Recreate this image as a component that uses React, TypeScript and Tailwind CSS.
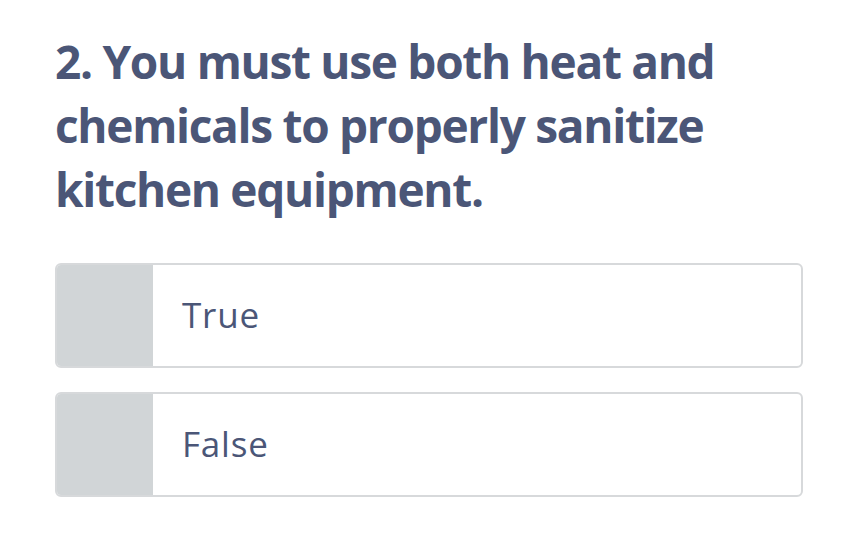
import React from 'react';

const options = ['True', 'False'];

const App: React.FC = () => {
  return (
    <div
      className="min-h-screen bg-white text-[#4b5677]"
      style={{ fontFamily: '"Open Sans", "Liberation Sans", sans-serif' }}
    >
      <div className="w-[748px] ml-[55px] pt-[29px]">
        <h2 className="text-[46px] leading-[64px] font-bold tracking-[-1.3px]">
          2. You must use both heat and chemicals to properly sanitize kitchen equipment.
        </h2>
        <div className="mt-[42px] flex flex-col gap-[24px]">
          {options.map((opt) => (
            <button
              key={opt}
              className="flex h-[105px] w-full overflow-hidden rounded-[6px] border-2 border-[#d7d9db] bg-white text-left"
            >
              <span className="w-[96px] shrink-0 bg-[#d1d5d7]" />
              <span className="flex items-center pl-[29px] text-[35px] font-normal tracking-[0.8px]">{opt}</span>
            </button>
          ))}
        </div>
      </div>
    </div>
  );
};

export default App;
